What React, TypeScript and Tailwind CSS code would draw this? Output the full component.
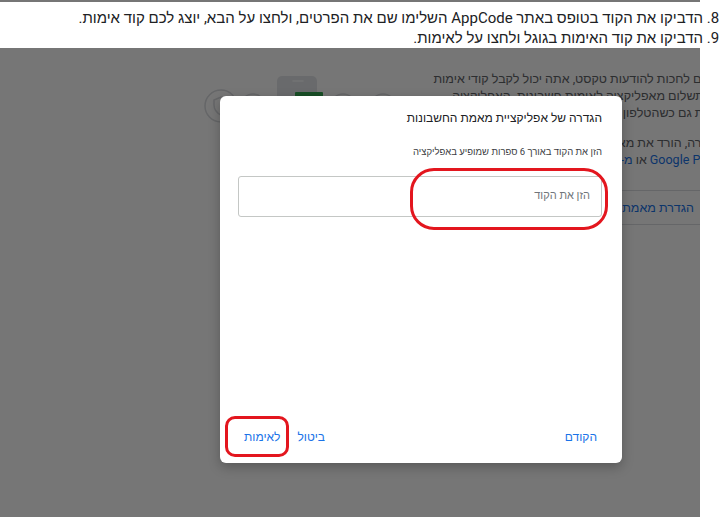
const font = { fontFamily: 'Roboto, "Liberation Sans", Arial, sans-serif' }

function Illustration() {
  return (
    <svg width="200" height="60" viewBox="0 0 200 60" className="ml-[200px] shrink-0">
      <circle cx="21" cy="36" r="16" fill="none" stroke="#dadce0" strokeWidth="1.5" />
      <path d="M21 27 l7 3 v5 c0 5 -3 8 -7 10 c-4 -2 -7 -5 -7 -10 v-5 z" fill="none" stroke="#dadce0" strokeWidth="1.5" />
      <circle cx="53" cy="36" r="12" fill="none" stroke="#dadce0" strokeWidth="1.5" />
      <rect x="77" y="6" width="40" height="60" rx="5" fill="#e4e6e9" />
      <line x1="93" y1="11" x2="103" y2="11" stroke="#f8f9fa" strokeWidth="1.5" strokeLinecap="round" />
      <rect x="95" y="22" width="28" height="22" rx="1" fill="#34a853" />
      <circle cx="143" cy="36" r="12" fill="none" stroke="#dadce0" strokeWidth="1.5" />
      <circle cx="183" cy="36" r="12" fill="none" stroke="#dadce0" strokeWidth="1.5" />
    </svg>
  )
}

function Background() {
  return (
    <div className="flex pt-[22px]">
      <Illustration />
      <div dir="rtl" className="ml-[32px] w-[296px] shrink-0 text-right text-[12.5px] leading-[17px] text-[#5f6368]">
        <p className="whitespace-nowrap">במקום לחכות להודעות טקסט, אתה יכול לקבל קודי אימות</p>
        <p className="whitespace-nowrap">ללא תשלום מאפליקציה לאימות חשבונות. האפליקציה</p>
        <p className="whitespace-nowrap">פועלת גם כשהטלפון שלך במצב אופליין.</p>
        <p className="mt-[13px] whitespace-nowrap">להגדרה, הורד את מאמת Google</p>
        <p className="whitespace-nowrap">
          <span className="text-[#1a73e8]">מ-Google Play</span> או <span className="text-[#1a73e8]">מ-App Store</span>
        </p>
        <div className="mt-[22px] h-px w-full bg-[#dadce0]" />
        <div className="py-[8px] pr-[34px] text-[#1a73e8]">הגדרת מאמת החשבונות</div>
        <div className="h-px w-full bg-[#dadce0]" />
      </div>
    </div>
  )
}

function Dialog() {
  return (
    <div dir="rtl" className="absolute left-[220px] top-[48px] flex h-[367px] w-[402px] flex-col rounded-[6px] bg-white pl-[18px] pr-[20px] pt-[12px] shadow-[0_4px_12px_rgba(0,0,0,0.25)]">
      <h2 className="text-[12px] leading-[20px] font-normal text-[#202124]">הגדרה של אפליקציית מאמת החשבונות</h2>
      <p className="mt-[17px] text-[9.5px] leading-[14px] text-[#3c4043]">הזן את הקוד באורך 6 ספרות שמופיע באפליקציה</p>
      <div className="mt-[17px] flex h-[41px] items-center rounded-[3px] border border-[#c4c7c5] px-[11px] text-[11px] text-[#70757a]">
        הזן את הקוד
      </div>
      <div className="mt-auto -ml-[18px] -mr-[20px] flex items-center justify-between pb-[18px] pl-[24px] pr-[25px] text-[12px] leading-[16px] font-medium text-[#1a73e8]">
        <span>הקודם</span>
        <div className="flex gap-[17px]">
          <span>ביטול</span>
          <span>לאימות</span>
        </div>
      </div>
      <div className="pointer-events-none absolute left-[190px] top-[72px] h-[62px] w-[198px] rounded-[24px] border-[3px] border-[#e3161e]" />
      <div className="pointer-events-none absolute left-[5px] top-[320px] h-[41px] w-[64px] rounded-[10px] border-[3px] border-[#e3161e]" />
    </div>
  )
}

export default function App() {
  return (
    <div className="h-[528px] w-[727px] bg-white" style={font}>
      <div className="h-[2px] w-[700px] bg-[#767676]" />
      <ol dir="rtl" start={8} className="list-decimal pr-[24px] pt-[6px] text-[15px] leading-[20px] text-[#202124] whitespace-nowrap">
        <li>הדביקו את הקוד בטופס באתר AppCode השלימו שם את הפרטים, ולחצו על הבא, יוצג לכם קוד אימות.</li>
        <li>הדביקו את קוד האימות בגוגל ולחצו על לאימות.</li>
      </ol>
      <div className="relative h-[469px] w-[700px] overflow-hidden bg-white">
        <Background />
        <div className="absolute inset-0 bg-[rgba(0,0,0,0.537)]" />
        <Dialog />
      </div>
    </div>
  )
}
